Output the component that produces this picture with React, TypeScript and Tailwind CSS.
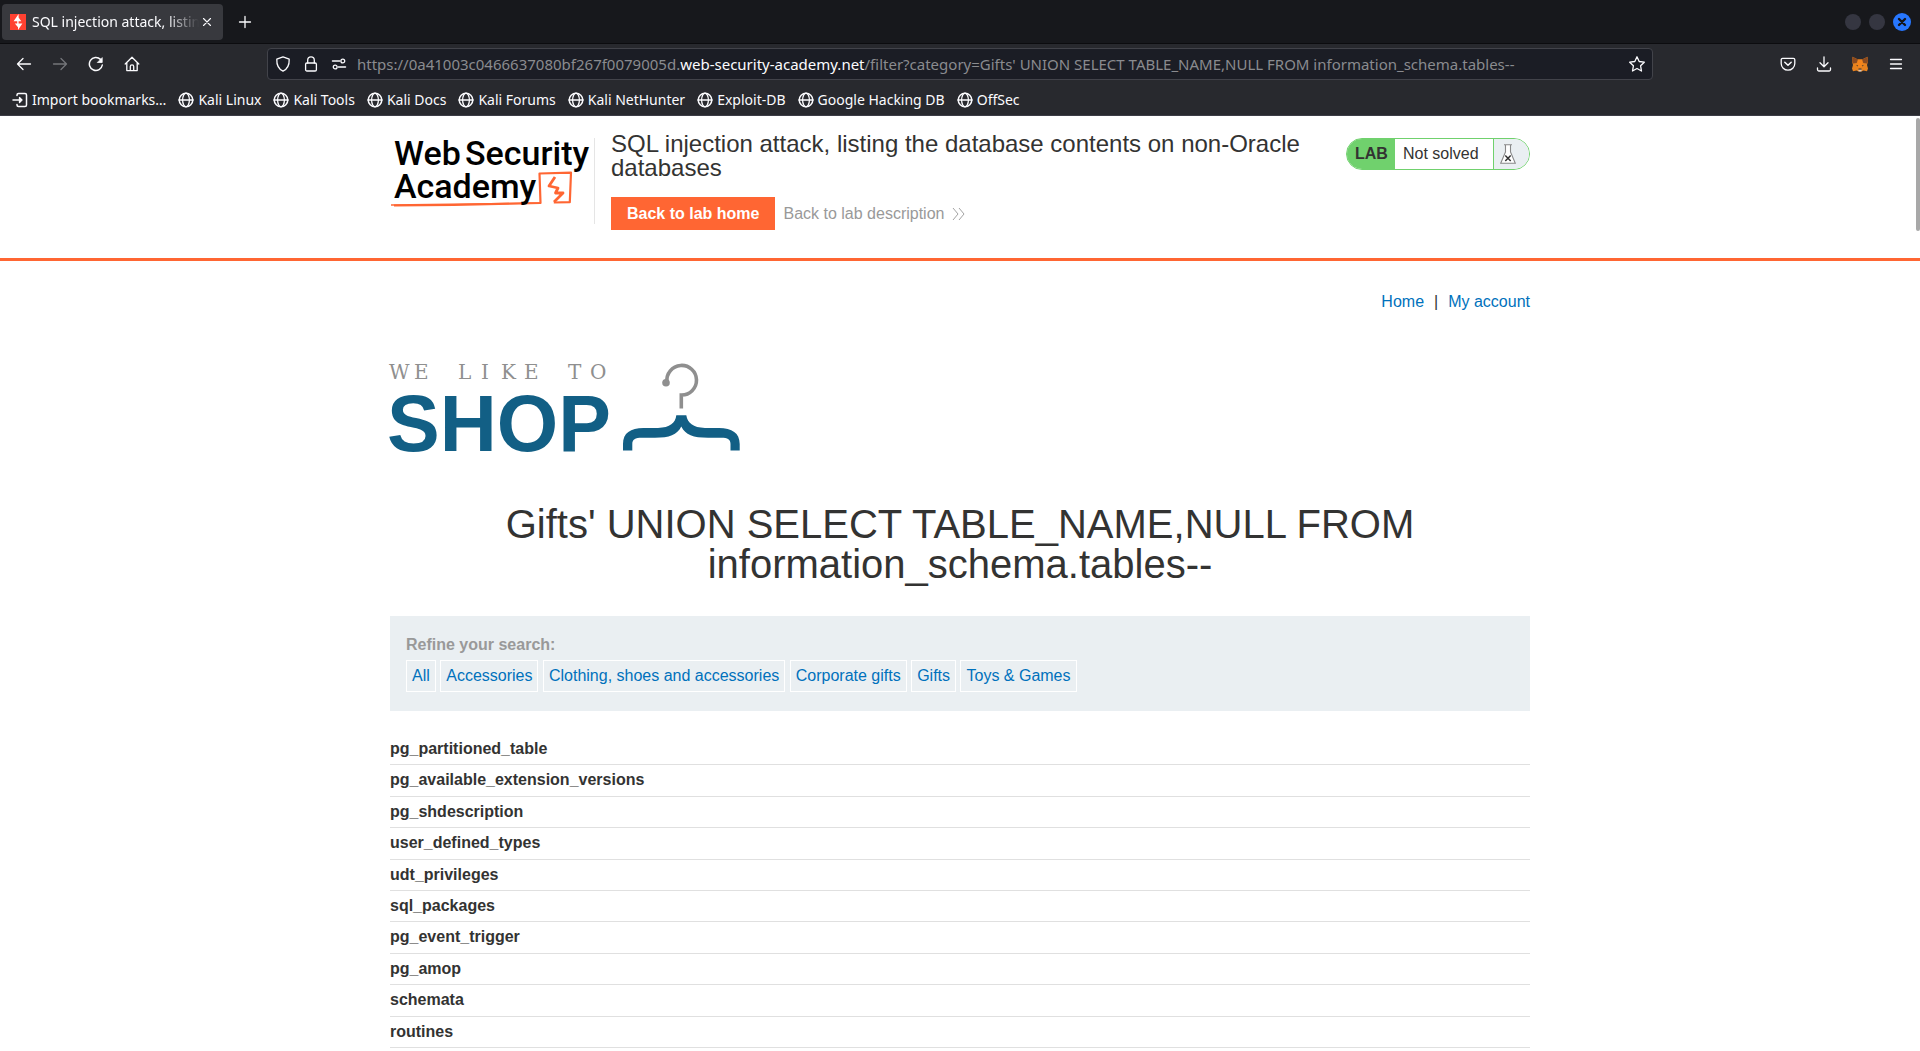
import React from "react";

const bookmarks = [
  "Kali Linux",
  "Kali Tools",
  "Kali Docs",
  "Kali Forums",
  "Kali NetHunter",
  "Exploit-DB",
  "Google Hacking DB",
  "OffSec",
];

const categories = [
  "All",
  "Accessories",
  "Clothing, shoes and accessories",
  "Corporate gifts",
  "Gifts",
  "Toys & Games",
];

const rows = [
  "pg_partitioned_table",
  "pg_available_extension_versions",
  "pg_shdescription",
  "user_defined_types",
  "udt_privileges",
  "sql_packages",
  "pg_event_trigger",
  "pg_amop",
  "schemata",
  "routines",
];

type IconProps = { children: React.ReactNode; className?: string };

function Icon({ children, className = "size-4" }: IconProps) {
  return (
    <svg
      viewBox="0 0 16 16"
      className={className}
      fill="none"
      stroke="currentColor"
      strokeWidth="1.3"
      strokeLinecap="round"
      strokeLinejoin="round"
      aria-hidden="true"
    >
      {children}
    </svg>
  );
}

function Globe() {
  return (
    <Icon>
      <circle cx="8" cy="8" r="6.8" strokeWidth="1.5" />
      <ellipse cx="8" cy="8" rx="3.4" ry="6.8" />
      <path d="M1 8h14" strokeWidth="1.5" />
    </Icon>
  );
}

function TabStrip() {
  return (
    <div className="flex h-11 items-center border-b border-[#0c0c0f] bg-[#17181c] pl-0.5 pr-[9px]">
      <div className="flex h-9 w-[221px] items-center rounded bg-[#38393e] pl-2 pr-2">
        <svg viewBox="0 0 16 16" className="size-4 shrink-0" aria-hidden="true">
          <path fill="#ff4131" d="M0 0h16v16H0z" />
          <path fill="#fff" d="M8.600 0 3.600 7.200h3.600v2.400H4.800L8 13.200V16l4.400-6.600H8.600V7.200h2.700L8.600 3.600z" />
        </svg>
        <span className="ml-1.5 min-w-0 flex-1 overflow-hidden whitespace-nowrap text-sm leading-5 [mask-image:linear-gradient(to_right,#000_80%,transparent)]">
          SQL injection attack, listing
        </span>
        <button aria-label="Close tab" className="flex size-4 items-center justify-center">
          <Icon className="size-4">
            <path d="m4.500 4.500 7 7m0-7-7 7" strokeWidth="1.100" />
          </Icon>
        </button>
      </div>
      <button aria-label="New tab" className="ml-3 flex size-5 items-center justify-center">
        <Icon>
          <path d="M8 2.500v11M2.500 8h11" />
        </Icon>
      </button>
      <div className="ml-auto flex items-center gap-2">
        <button aria-label="Minimize" className="size-4 rounded-full bg-[#353641]" />
        <button aria-label="Maximize" className="size-4 rounded-full bg-[#353641]" />
        <button
          aria-label="Close window"
          className="flex size-[18px] items-center justify-center rounded-full bg-[#2777ff] text-[#14151a]"
        >
          <Icon>
            <path d="m5 5 6 6m0-6-6 6" strokeWidth="2.400" />
          </Icon>
        </button>
      </div>
    </div>
  );
}

function NavBar() {
  return (
    <div className="flex h-10 items-center pl-4 pr-4">
      <div className="flex w-[251px] shrink-0 items-center gap-5">
        <button aria-label="Back">
          <Icon>
            <path d="M14.500 8H1.500M7 2.500 1.500 8 7 13.500" />
          </Icon>
        </button>
        <button aria-label="Forward" className="text-[#74757a]">
          <Icon>
            <path d="M1.500 8h13M9 2.500 14.500 8 9 13.500" />
          </Icon>
        </button>
        <button aria-label="Reload">
          <Icon>
            <path d="M14.300 9A6.500 6.500 0 1 1 12.500 3.400" strokeWidth="1.500" />
            <path d="M14.200 2v4.500H9.700z" fill="currentColor" strokeWidth="0.800" />
          </Icon>
        </button>
        <button aria-label="Home">
          <Icon>
            <path d="M1.200 8 8 1.300 14.800 8M2.800 6.800V14.600h10.400V6.800M6.300 14.400V10.500a1.700 1.700 0 0 1 3.400 0v3.900" />
          </Icon>
        </button>
      </div>
      <div className="flex h-8 min-w-0 flex-1 items-center rounded border border-[#42434a] bg-[#1b1d25] pl-[7px] pr-[7px]">
        <div className="flex shrink-0 items-center gap-3">
          <Icon>
            <path d="M8 .900 14.200 3.200c.2 5.300-1.700 9.800-6.200 11.900C3.500 13 1.600 8.500 1.800 3.200z" />
          </Icon>
          <Icon>
            <rect x="2.600" y="7" width="10.800" height="8" rx="1.300" />
            <path d="M4.700 7V4.200a3.300 3.300 0 0 1 6.600 0V7" />
          </Icon>
          <Icon>
            <path d="M1.500 5h7.200M7.300 11h7.200" strokeWidth="1.500" />
            <circle cx="11.800" cy="5" r="1.900" />
            <circle cx="4.200" cy="11" r="1.900" />
          </Icon>
        </div>
        <div className="ml-2.5 min-w-0 flex-1 overflow-hidden whitespace-nowrap text-[15px] leading-6 text-[#8a8b8f]">
          https://0a41003c0466637080bf267f0079005d.
          <span className="text-[#fbfbfe]">web-security-academy.net</span>
          /filter?category=Gifts' UNION SELECT TABLE_NAME,NULL FROM information_schema.tables--
        </div>
        <button aria-label="Bookmark this page">
          <Icon>
            <path d="m8 .800 2.200 4.700 5.100.700-3.700 3.600.900 5.200L8 12.500 3.500 15l.900-5.200L.700 6.200l5.100-.700z" />
          </Icon>
        </button>
      </div>
      <div className="ml-[127px] flex shrink-0 items-center gap-5">
        <button aria-label="Save to Pocket">
          <Icon>
            <path d="M2.600 2.300h10.800a1.400 1.400 0 0 1 1.400 1.400V7.400a6.800 6.800 0 0 1-13.600 0V3.700a1.400 1.400 0 0 1 1.400-1.400z" />
            <path d="m4.800 6.300 3.200 3 3.200-3" strokeWidth="1.500" />
          </Icon>
        </button>
        <button aria-label="Downloads">
          <Icon>
            <path d="M8 .800v9.700M4 6.700l4 4 4-4M1.500 12v1.600a1.400 1.400 0 0 0 1.400 1.400h10.200a1.400 1.400 0 0 0 1.400-1.400V12" />
          </Icon>
        </button>
        <button aria-label="MetaMask">
          <svg viewBox="0 0 16 16" className="size-4" aria-hidden="true">
            <path fill="#e8821e" d="M.500.800 6 3.600h4L15.500.800l.5 4.400-1 3.800 1 3.600-1 2.700-3.500-.8L9.500 15.600h-3L4.500 14.500 1 15.300 0 12.600 1 9 0 5.200z" />
            <path fill="#8a4a20" d="M.500.800 6 3.600 4.700 7 1 7.600 0 5.200zM15.500.800 10 3.600 11.300 7l3.700.600 1-2.400z" />
            <path fill="#f6851b" d="M6 3.600h4l.8 7.400H5.200z" />
            <path fill="#3a3330" d="m4 9 2.200.600-.4 1zM12 9l-2.200.600.4 1zM6.600 12.600h2.800l.3 1.200H6.300z" />
            <path fill="#d5c6ba" d="M6.200 13.700h3.600l-.5 1.900H6.700z" />
          </svg>
        </button>
        <button aria-label="Open application menu">
          <Icon>
            <path d="M2.500 3.500h11M2.500 8h11M2.500 12.500h11" />
          </Icon>
        </button>
      </div>
    </div>
  );
}

function BookmarkBar() {
  return (
    <div className="flex h-[31px] items-center gap-3 whitespace-nowrap pl-3 text-sm leading-5">
      <a href="#import" className="flex items-center gap-1">
        <Icon>
          <path d="M1 8h8M5 3.500V3a1.500 1.500 0 0 1 1.500-1.500h6.500A1.500 1.500 0 0 1 14.500 3v10a1.500 1.500 0 0 1-1.500 1.500H6.500A1.500 1.500 0 0 1 5 13v-.500" strokeWidth="1.500" />
          <path d="M7.500 5.500 10 8l-2.500 2.500z" fill="currentColor" />
        </Icon>
        Import bookmarks…
      </a>
      {bookmarks.map((name) => (
        <a key={name} href="#bookmark" className="flex items-center gap-1">
          <Globe />
          {name}
        </a>
      ))}
    </div>
  );
}

function AcademyLogo() {
  return (
    <svg
      viewBox="0 0 204 72"
      className="h-[72px] w-[204px] shrink-0 overflow-visible"
      role="img"
      aria-label="Web Security Academy"
    >
      <path d="M1 67 150 65" stroke="#ff6633" strokeWidth="1.500" />
      <g fill="none" stroke="#ff6633" strokeWidth="2.200" strokeLinejoin="round">
        <path d="m4 67.500 60-.500 86.500-2-1-29.500 31.500-.800-1.200 29.500-16 .300" />
        <path d="m165 39-6 9 9 2-2.500 5h7.500l-9 9" strokeWidth="2.800" />
      </g>
      <g fontFamily="Roboto, sans-serif" fontWeight="500" fill="#000">
        <text x="4" y="27" fontSize="34">Web</text>
        <text x="75" y="27" fontSize="34">Security</text>
        <text x="4" y="60" fontSize="34">Academy</text>
      </g>
    </svg>
  );
}

function LabStatus() {
  return (
    <div className="flex h-8 shrink-0 overflow-hidden rounded-full border border-[#70d16d] bg-white text-base leading-[18px]">
      <span className="flex w-12 items-center bg-[#70d16d] pl-2 font-bold">LAB</span>
      <span className="flex w-[98px] items-center pl-2">Not solved</span>
      <span className="flex w-9 items-center border-l border-[#70d16d] bg-[#eaeff2] pl-1.5">
        <svg viewBox="0 0 16 20" className="h-5 w-4" fill="none" aria-hidden="true">
          <path d="M4 .700h8M5.500.700V8L.700 19.300h14.600L10.500 8V.700z" fill="#fff" stroke="#888" strokeWidth="1.100" />
          <path d="m5.300 11.500 5.400 5.500m0-5.500L5.300 17" stroke="#333" strokeWidth="1.500" />
        </svg>
      </span>
    </div>
  );
}

function AcademyHeader() {
  return (
    <header className="border-b-[3px] border-[#ff6633] pb-7">
      <div className="mx-auto flex w-full max-w-[1140px] items-start">
        <div className="mt-[22px] h-[86px] shrink-0 border-r border-[#e5e5e5]">
          <AcademyLogo />
        </div>
        <div className="min-w-0 flex-1 pl-4 pt-4">
          <h2 className="max-w-[720px] text-2xl leading-6">
            SQL injection attack, listing the database contents on non-Oracle databases
          </h2>
          <div className="mt-[17px] flex items-center">
            <a href="#lab-home" className="bg-[#ff6633] px-4 py-[7px] text-base leading-[19px] font-bold text-white">
              Back to lab home
            </a>
            <a href="#lab-description" className="ml-2 flex items-center text-base leading-[19px] text-[#999]">
              Back to lab description
              <svg viewBox="0 0 14 14" className="ml-2 size-3.5" fill="none" stroke="#999" strokeWidth="0.900" aria-hidden="true">
                <path d="m1 1 5 6-5 6M7 1l5 6-5 6" />
              </svg>
            </a>
          </div>
        </div>
        <div className="pt-[22px]">
          <LabStatus />
        </div>
      </div>
    </header>
  );
}

function ShopLogo() {
  return (
    <svg viewBox="0 0 352 90" className="h-[90px] w-[352px] overflow-visible" role="img" aria-label="We like to shop">
      <text
        x="-1 24 45 68 91 111 134 156 178 200"
        y="15"
        fontFamily="'DejaVu Serif', serif"
        fontSize="20"
        fill="#8f8f8f"
      >
        WE LIKE TO
      </text>
      <text x="-3" y="87" fontFamily="'Liberation Sans', sans-serif" fontWeight="700" fontSize="79" fill="#125f85">
        SHOP
      </text>
      <path d="M277 18A14.800 14.800 0 1 1 291.300 31V44.500" fill="none" stroke="#8f8f8f" strokeWidth="3.600" />
      <circle cx="276" cy="18.800" r="3.800" fill="#8f8f8f" />
      <path
        d="M286.300 51.300H296.300C297.500 59 303 63.600 315 64H329C342 64 349.700 69 349.700 80V86.500H340.500V80C340.500 75.500 338 73.700 331 73.700H318C303 73.700 295.500 71 291.300 62.500C287 71 279.500 73.700 265 73.700H252C245 73.700 242.300 75.500 242.300 80V86.500H233V80C233 69 240.500 64 253.500 64H268C280 63.600 285.500 59 286.300 51.300Z"
        fill="#125f85"
      />
    </svg>
  );
}

export default function App() {
  return (
    <div className="h-screen overflow-hidden bg-white font-['Liberation_Sans',Arial,sans-serif] text-[#333332]">
      <div className="border-b border-[#3c3d46] bg-[#28292e] font-['Noto_Sans',sans-serif] text-[#fbfbfe]">
        <TabStrip />
        <NavBar />
        <BookmarkBar />
      </div>
      <div className="relative">
        <div className="absolute top-0.5 right-0 h-[113px] w-1 rounded-sm bg-[#a8a8a8]" />
        <AcademyHeader />
        <main className="mx-auto max-w-[1140px]">
          <nav className="flex justify-end gap-2.5 pt-8 text-base leading-[18px]">
            <a href="#home" className="text-[#0071bc]">Home</a>
            <span>|</span>
            <a href="#account" className="text-[#0071bc]">My account</a>
          </nav>
          <div className="mt-[53px]">
            <ShopLogo />
          </div>
          <h1 className="mx-auto mt-[50px] max-w-[1000px] text-center text-[40px] leading-10">
            Gifts' UNION SELECT TABLE_NAME,NULL FROM information_schema.tables--
          </h1>
          <section className="mt-8 bg-[#eaeff2] px-4 pt-[21px] pb-[19px] text-base">
            <p className="leading-4 font-bold text-[#999]">Refine your search:</p>
            <div className="mt-[7px] leading-8">
              {categories.map((name) => (
                <React.Fragment key={name}>
                  <a href="#category" className="inline-block border border-white px-[5px] leading-[30px] text-[#0071bc]">
                    {name}
                  </a>{" "}
                </React.Fragment>
              ))}
            </div>
          </section>
          <table className="mt-[23px] w-full border-collapse text-left text-base leading-[1.15]">
            <tbody>
              {rows.map((name) => (
                <tr key={name} className="border-b border-[#e0e0e0]">
                  <th scope="row" className="py-1.5 font-bold">{name}</th>
                </tr>
              ))}
            </tbody>
          </table>
        </main>
      </div>
    </div>
  );
}
